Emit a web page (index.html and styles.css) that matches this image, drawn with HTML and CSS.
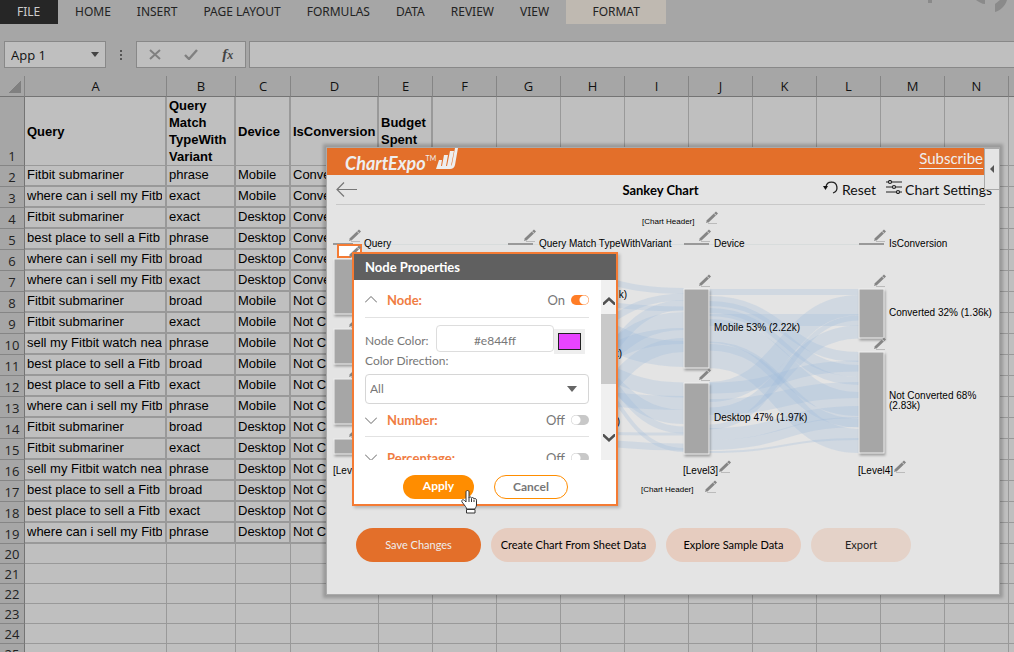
FILE: index.html
```html
<!DOCTYPE html>
<html lang="en">
<head>
    <meta charset="UTF-8">
    <meta name="viewport" content="width=device-width, initial-scale=1.0">
    <title>Sankey Chart</title>
    <link rel="stylesheet" href="styles.css">
</head>
<body>
    <nav class="ribbon">
        <a href="#" class="tab tab-file">FILE</a>
        <a href="#" class="tab">HOME</a>
        <a href="#" class="tab">INSERT</a>
        <a href="#" class="tab">PAGE LAYOUT</a>
        <a href="#" class="tab">FORMULAS</a>
        <a href="#" class="tab">DATA</a>
        <a href="#" class="tab">REVIEW</a>
        <a href="#" class="tab">VIEW</a>
        <a href="#" class="tab tab-format">FORMAT</a>
        <svg class="ribbon-art" width="88" height="13" viewBox="0 0 88 13">
            <path d="M2 0h4v3H2zM50 0h9v4c-3 0-6-2-9-4zM69 4l5-4h7c-2 6-6 10-12 12z" fill="#8a8a8a"/>
        </svg>
    </nav>

    <div class="formula-bar">
        <div class="name-box">
            <input type="text" value="App 1" aria-label="Name box">
            <button type="button" aria-label="Names"><svg width="8" height="5" viewBox="0 0 8 5"><path d="M0 0h8L4 5z" fill="#444"/></svg></button>
        </div>
        <svg class="dots" width="4" height="12" viewBox="0 0 4 12"><path d="M1 1h2v2H1zM1 5h2v2H1zM1 9h2v2H1z" fill="#555"/></svg>
        <div class="formula-buttons">
            <button type="button" aria-label="Cancel entry"><svg width="12" height="11" viewBox="0 0 12 11"><path d="M1 1l10 9M11 1L1 10" stroke="#808080" stroke-width="2" fill="none"/></svg></button>
            <button type="button" aria-label="Enter"><svg width="14" height="11" viewBox="0 0 14 11"><path d="M1 6l4 4 8-9" stroke="#808080" stroke-width="2.4" fill="none"/></svg></button>
            <button type="button" class="fx" aria-label="Insert function">f<small>x</small></button>
        </div>
        <input class="formula-input" type="text" aria-label="Formula">
    </div>

    <main class="sheet">
        <table>
            <colgroup>
                <col class="w-num"><col class="w-a"><col class="w-b"><col class="w-c"><col class="w-d"><col class="w-e">
                <col><col><col><col><col><col><col><col><col><col>
            </colgroup>
            <thead id="sheetHead"></thead>
            <tbody id="sheetBody"></tbody>
        </table>
    </main>

    <section class="panel">
        <header class="panel-header">
            <div class="logo">ChartExpo<sup>TM</sup>
                <svg width="22" height="22" viewBox="0 0 22 22"><path d="M3 12h3l-1 6H1zM8 7h4l-2 11H6zM14 3h4l-3 15h-4zM19 0h3l-3 17q-1 4-5 4H0l1-3h13q2 0 2-2z" fill="#eee"/></svg>
            </div>
            <a href="#" class="subscribe">Subscribe</a>
        </header>
        <button type="button" class="collapse" aria-label="Collapse"><svg width="4" height="8" viewBox="0 0 4 8"><path d="M4 0v8L0 4z" fill="#555"/></svg></button>

        <div class="toolbar">
            <button type="button" aria-label="Back"><svg width="21" height="15" viewBox="0 0 21 15"><path d="M21 7.500H1M8 .5l-7 7 7 7" stroke="#777" fill="none" stroke-width="1.200"/></svg></button>
            <h1>Sankey Chart</h1>
            <div class="tools">
                <button type="button">
                    <svg width="16" height="15" viewBox="0 0 16 15"><path d="M3 7a5.500 5.500 0 1 1 7 6" stroke="#222" stroke-width="1.300" fill="none"/><path d="M0 6h5l-2.500 4z" fill="#111"/></svg>
                    Reset
                </button>
                <button type="button">
                    <svg width="16" height="14" viewBox="0 0 16 14"><g stroke="#222" stroke-width="1.200" fill="#e4e4e4"><path d="M0 2h16M0 7h16M0 12h16"/><circle cx="4" cy="2" r="1.500"/><circle cx="8" cy="7" r="1.500"/><circle cx="12" cy="12" r="1.500"/></g></svg>
                    Chart Settings
                </button>
            </div>
        </div>

        <svg class="chart" width="672" height="300" viewBox="327 205 672 300">
            <defs>
                <g id="pencil">
                    <path d="M1.500 10.500L11 1.500" stroke="#858585" stroke-width="3"/>
                    <path d="M0 12l1-3 2 2z" fill="#858585"/>
                    <path d="M8.200 2.400l2 2.200" stroke="#dcdcdc" stroke-width="1"/>
                    <path d="M2 12.500h9" stroke="#bbb"/>
                </g>
            </defs>

            <g class="flows">
                <path d="M534 272C609 272 609 291 684 291" stroke-width="6"/>
                <path d="M534 345C609 345 609 297 684 297" stroke-width="7"/>
                <path d="M534 300C609 300 609 309 684 309" stroke-width="5"/>
                <path d="M534 400C609 400 609 305 684 305" stroke-width="10"/>
                <path d="M534 385C609 385 609 321 684 321" stroke-width="18"/>
                <path d="M534 370C609 370 609 336 684 336" stroke-width="16"/>
                <path d="M534 318C609 318 609 354 684 354" stroke-width="26"/>
                <path d="M534 430C609 430 609 345 684 345" stroke-width="14"/>
                <path d="M534 355C609 355 609 390 684 390" stroke-width="15"/>
                <path d="M534 395C609 395 609 403 684 403" stroke-width="14"/>
                <path d="M534 340C609 340 609 417 684 417" stroke-width="14"/>
                <path d="M534 325C609 325 609 430 684 430" stroke-width="7"/>
                <path d="M534 433C609 433 609 434 684 434" stroke-width="3"/>
                <path d="M534 330C609 330 609 450 684 450" stroke-width="4"/>
                <path d="M534 440C609 440 609 447 684 447" stroke-width="7"/>

                <path d="M709 292H859" stroke-width="6"/>
                <path d="M709 320H859" stroke-width="12"/>
                <path d="M709 301C784 301 784 357 859 357" stroke-width="10"/>
                <path d="M709 307C784 307 784 371 859 371" stroke-width="12"/>
                <path d="M709 312C784 312 784 381 859 381" stroke-width="8"/>
                <path d="M709 331C784 331 784 404 859 404" stroke-width="24"/>
                <path d="M709 346C784 346 784 423 859 423" stroke-width="9"/>
                <path d="M709 356C784 356 784 441 859 441" stroke-width="24"/>
                <path d="M709 392C784 392 784 305 859 305" stroke-width="20"/>
                <path d="M709 414C784 414 784 332 859 332" stroke-width="13"/>
                <path d="M709 427C784 427 784 318 859 318" stroke-width="5"/>
                <path d="M709 388C784 388 784 366 859 366" stroke-width="11"/>
                <path d="M709 407C784 407 784 390 859 390" stroke-width="16"/>
                <path d="M709 434C784 434 784 412 859 412" stroke-width="12"/>
                <path d="M709 445C784 445 784 422 859 422" stroke-width="10"/>
                <path d="M709 452C784 452 784 439 859 439" stroke-width="2"/>
            </g>

            <path class="level-line" d="M333 244.500H859"/>
            <path class="level-mark" d="M333 244h20M508 244h25M684 244h25M859 244h25"/>

            <g class="nodes">
                <rect x="334" y="259" width="25" height="55"/>
                <rect x="334" y="329" width="25" height="35"/>
                <rect x="334" y="379" width="25" height="45"/>
                <rect x="334" y="439" width="25" height="15"/>
                <rect x="684" y="289" width="25" height="79"/>
                <rect x="684" y="383" width="25" height="71"/>
                <rect x="859" y="289" width="25" height="49"/>
                <rect x="859" y="352" width="25" height="101"/>
            </g>

            <rect x="338" y="245" width="23" height="12" fill="#fff" stroke="#f47b34" stroke-width="2"/>

            <use href="#pencil" x="706" y="211"/>
            <use href="#pencil" x="349" y="229"/>
            <use href="#pencil" x="524" y="229"/>
            <use href="#pencil" x="699" y="229"/>
            <use href="#pencil" x="874" y="229"/>
            <use href="#pencil" x="349" y="245"/>
            <use href="#pencil" x="349" y="315"/>
            <use href="#pencil" x="349" y="365"/>
            <use href="#pencil" x="349" y="425"/>
            <use href="#pencil" x="699" y="274"/>
            <use href="#pencil" x="699" y="368"/>
            <use href="#pencil" x="874" y="274"/>
            <use href="#pencil" x="874" y="337"/>
            <use href="#pencil" x="719" y="460"/>
            <use href="#pencil" x="894" y="460"/>
            <use href="#pencil" x="705" y="480"/>

            <text class="small" x="642" y="224">[Chart Header]</text>
            <text x="364" y="247">Query</text>
            <text x="539" y="247">Query Match TypeWithVariant</text>
            <text x="714" y="247">Device</text>
            <text x="889" y="247">IsConversion</text>
            <text x="627" y="298" text-anchor="end">k)</text>
            <text x="622" y="357" text-anchor="end">k)</text>
            <text x="620" y="425" text-anchor="end">k)</text>
            <text x="714" y="331">Mobile 53% (2.22k)</text>
            <text x="714" y="421">Desktop 47% (1.97k)</text>
            <text x="889" y="316">Converted 32% (1.36k)</text>
            <text x="889" y="399">Not Converted 68%</text>
            <text x="889" y="409">(2.83k)</text>
            <text x="333" y="474">[Level1]</text>
            <text x="683" y="474">[Level3]</text>
            <text x="858" y="474">[Level4]</text>
            <text class="small" x="641" y="492">[Chart Header]</text>
        </svg>

        <div class="actions">
            <button type="button" class="pill pill-save">Save Changes</button>
            <button type="button" class="pill pill-create">Create Chart From Sheet Data</button>
            <button type="button" class="pill pill-explore">Explore Sample Data</button>
            <button type="button" class="pill pill-export">Export</button>
        </div>

        <form class="dialog">
            <h2>Node Properties</h2>
            <div class="dialog-body">
                <div class="fields">
                    <div class="group group-first">
                        <svg width="12" height="7" viewBox="0 0 12 7"><path d="M0 6.500l6-6 6 6" stroke="#666" fill="none"/></svg>
                        <h3>Node:</h3>
                        <label for="nodeOn">On</label>
                        <input type="checkbox" class="switch" id="nodeOn" checked>
                    </div>
                    <div class="color-row">
                        <label for="nodeColor">Node Color:</label>
                        <input type="text" id="nodeColor" value="#e844ff">
                        <button type="button" class="swatch" aria-label="Pick color"></button>
                    </div>
                    <label class="direction" for="direction">Color Direction:</label>
                    <div class="select-wrap">
                        <select id="direction"><option>All</option></select>
                        <svg width="10" height="6" viewBox="0 0 10 6"><path d="M0 0h10L5 6z" fill="#666"/></svg>
                    </div>
                    <div class="group group-tight">
                        <svg width="12" height="7" viewBox="0 0 12 7"><path d="M0 .5l6 6 6-6" stroke="#666" fill="none"/></svg>
                        <h3>Number:</h3>
                        <label for="numberOn">Off</label>
                        <input type="checkbox" class="switch" id="numberOn">
                    </div>
                    <div class="group group-last">
                        <svg width="12" height="7" viewBox="0 0 12 7"><path d="M0 .5l6 6 6-6" stroke="#666" fill="none"/></svg>
                        <h3>Percentage:</h3>
                        <label for="percentOn">Off</label>
                        <input type="checkbox" class="switch" id="percentOn">
                    </div>
                </div>
                <div class="scrollbar">
                    <svg width="12" height="8" viewBox="0 0 12 8"><path d="M0 5.500L6 0l6 5.500V9L6 3.500 0 9z" fill="#505050"/></svg>
                    <div class="thumb"></div>
                    <svg width="12" height="8" viewBox="0 0 12 8"><path d="M0 2.500L6 8l6-5.500V-1L6 4.500 0-1z" fill="#505050"/></svg>
                </div>
            </div>
            <div class="dialog-footer">
                <button type="button" class="apply">Apply</button>
                <button type="button" class="cancel">Cancel</button>
            </div>
            <svg class="cursor" width="17" height="24" viewBox="0 0 17 24"><path d="M4.500 16.500L1 12c-1-2 1-3 2.500-1.500L5 12V2c0-2 3-2 3 0v6c0-1.500 2.500-1.500 2.500.5 0-1.500 2.500-1.200 2.500.7 0-1.200 2.500-1 2.500 1V15c0 2-1.500 3-1.500 4H5.500c0-1-.5-2-1-2.500zM5.500 19.500H14V23H5.500z" fill="#fff" stroke="#333"/><path d="M8 8v4M10.500 9v3M13 10v2" stroke="#333"/></svg>
        </form>
    </section>

    <script>
        const f = 'Fitbit submariner';
        const w = 'where can i sell my Fitb';
        const b = 'best place to sell a Fitb';
        const s = 'sell my Fitbit watch nea';
        const header = ['Query', 'Query Match TypeWith Variant', 'Device', 'IsConversion', 'Budget Spent'];
        const rows = [
            [f, 'phrase', 'Mobile'], [w, 'exact', 'Mobile'], [f, 'exact', 'Desktop'],
            [b, 'phrase', 'Desktop'], [w, 'broad', 'Desktop'], [w, 'exact', 'Desktop'],
            [f, 'broad', 'Mobile'], [f, 'exact', 'Mobile'], [s, 'phrase', 'Mobile'],
            [b, 'broad', 'Mobile'], [b, 'exact', 'Mobile'], [w, 'phrase', 'Mobile'],
            [f, 'broad', 'Desktop'], [f, 'exact', 'Desktop'], [s, 'phrase', 'Desktop'],
            [b, 'broad', 'Desktop'], [b, 'exact', 'Desktop'], [w, 'phrase', 'Desktop']
        ];
        const letters = 'ABCDEFGHIJKLMN'.split('');
        letters.push('');

        document.getElementById('sheetHead').innerHTML =
            '<tr><th class="corner"></th>' + letters.map(l => `<th>${l}</th>`).join('') + '</tr>';

        // row 1 is the header, 2-19 hold data, the rest stay empty
        let html = '';
        for (let n = 1; n <= 25; n++) {
            let cells = [];
            if (n === 1) cells = header;
            else if (n <= 19) cells = [...rows[n - 2], n < 8 ? 'Converted' : 'Not Converted', ''];
            const type = n === 1 ? 'title-row' : n <= 19 ? 'data-row' : 'empty-row';
            html += `<tr class="${type}"><th>${n}</th>`;
            letters.forEach((l, i) => {
                html += i < cells.length ? `<td class="filled"><div>${cells[i]}</div></td>` : '<td></td>';
            });
            html += '</tr>';
        }
        document.getElementById('sheetBody').innerHTML = html;
    </script>
</body>
</html>
```
FILE: styles.css
```css
* { box-sizing: border-box; }
body { margin: 0; height: 100vh; overflow: hidden; display: flex; flex-direction: column; background: #a6a6a6; font-family: "Open Sans", sans-serif; color: #111; }
button, input, select { font: inherit; color: inherit; border: none; background: none; padding: 0; margin: 0; }
button { cursor: pointer; }
a { text-decoration: none; color: inherit; }
h1, h2, h3 { margin: 0; }
svg { display: block; flex: none; }

.ribbon { display: flex; height: 24px; margin-bottom: 17px; flex: none; font: 12px/23px "Noto Sans", sans-serif; color: #222; }
.tab { padding: 0 13px; }
.tab-file { width: 58px; padding-left: 17px; margin-right: 4px; background: #262626; color: #ccc; }
.tab-format { width: 100px; margin-left: 4px; background: #bfb9b1; text-align: center; }
.ribbon-art { margin-left: auto; }

.formula-bar { display: flex; height: 27px; flex: none; padding-left: 4px; }
.name-box { display: flex; width: 102px; padding: 0 6px; background: #bfbfbf; border: 1px solid #888; }
.name-box input { flex: 1; min-width: 0; font-size: 13px; }
.dots { margin: 8px 13px 0; }
.formula-buttons { display: flex; width: 110px; margin-right: 3px; justify-content: space-around; align-items: center; background: #bfbfbf; border: 1px solid #888; }
.fx { font: italic bold 15px "Liberation Serif", serif; color: #444; }
.fx small { font-size: 12px; }
.formula-input { flex: 1; background: #bfbfbf; border: 1px solid #888; border-right: none; }

.sheet { flex: 1; min-height: 0; overflow: hidden; padding-top: 8px; }
.sheet table { width: 1073px; table-layout: fixed; border-collapse: separate; border-spacing: 0; }
.sheet col { width: 64px; }
.sheet .w-num { width: 25px; }
.sheet .w-a { width: 142px; }
.sheet .w-b { width: 69px; }
.sheet .w-c { width: 55px; }
.sheet .w-d { width: 88px; }
.sheet .w-e { width: 54px; }
.sheet th { padding: 0; font-size: 13px; line-height: 16px; font-weight: normal; background: #a6a6a6; }
.sheet thead th { height: 21px; border-right: 1px solid #858585; border-bottom: 1px solid #747474; }
.sheet .corner { background: linear-gradient(135deg, #a6a6a6 50%, #808080 50%) 9px 5px / 12px 12px no-repeat #a6a6a6; }
.sheet tbody th { vertical-align: bottom; border-right: 1px solid #747474; border-bottom: 1px solid #858585; color: #222; padding-bottom: 1px; }
.sheet td { padding: 0; background: #bfbfbf; border-right: 1px solid #999; border-bottom: 1px solid #999; }
.sheet td.filled { padding: 0 3px 0 2px; border-right: 2px solid #999; border-bottom: 2px solid #999; font: 13px/17px "Liberation Sans", sans-serif; color: #000; }
.filled div { overflow: hidden; white-space: nowrap; }
.title-row td, .title-row th { height: 68px; }
.sheet .title-row td.filled { padding-bottom: 0; padding-right: 0; border-bottom-width: 1px; font-weight: bold; }
.title-row .filled div { white-space: normal; overflow: visible; }
.data-row td, .data-row th { height: 21px; }
.data-row .filled { vertical-align: top; }
.empty-row td, .empty-row th { height: 20px; }

.panel { position: absolute; left: 326px; right: 14px; top: 147px; background: #e4e4e4; border: 1px solid #aaa; box-shadow: 0 0 3px 3px rgba(0, 0, 0, .2); }
.panel-header { display: flex; justify-content: space-between; height: 27px; padding: 0 2px 0 18px; margin-right: 14px; background: #e36f2a; color: #eee; }
.logo { display: flex; font: italic bold 18px/30px Lato, sans-serif; }
.logo sup { font: 7px/20px Lato, sans-serif; }
.subscribe { height: 21px; border-bottom: 1px solid #eee; font: 15px/20px Lato, sans-serif; }
.collapse { position: absolute; right: 0; top: 0; width: 15px; height: 42px; display: grid; place-items: center; background: #e4e4e4; border: 1px solid #aaa; border-right: none; }
.toolbar { display: grid; grid-template-columns: 1fr auto 1fr; align-items: center; height: 30px; margin: 0 14px 0 9px; border-bottom: 1px solid #c8c8c8; }
.toolbar h1 { font: bold 13px/20px Lato, sans-serif; color: #000; }
.tools { display: flex; gap: 10px; justify-content: flex-end; margin-right: -7px; }
.tools button { display: flex; gap: 3px; font: 14px/20px Lato, sans-serif; white-space: nowrap; color: #111; }

.chart { font: 10px "Liberation Sans", sans-serif; fill: #000; }
.chart .small { font-size: 8px; }
.flows path { fill: none; stroke: #9dbbdc; stroke-opacity: .28; }
.nodes rect { fill: #a6a6a6; stroke: #f0f0f0; stroke-width: 1px; filter: drop-shadow(1px 2px 1px rgba(0, 0, 0, .3)); }
.level-line { stroke: #d8dcdc; }
.level-mark { stroke: #999; stroke-width: 2px; }

.actions { display: flex; gap: 10px; padding: 23px 0 32px 29px; }
.pill { height: 34px; border-radius: 17px; background: #e6ccbf; font: 11px/34px Lato, sans-serif; color: #000; white-space: nowrap; }
.pill-save { width: 125px; background: #e36f2a; color: #eee; }
.pill-create { width: 165px; }
.pill-explore { width: 135px; }
.pill-export { width: 100px; background: #e4d2c8; color: #222; }

.dialog { position: absolute; left: 25px; top: 104px; width: 266px; background: #fff; border: 2px solid #f47b34; box-shadow: 2px 2px 3px rgba(0, 0, 0, .2); font: 12px/16px Lato, sans-serif; color: #777; }
.dialog h2 { height: 26px; padding-left: 11px; background: #606060; font: bold 13px/27px Lato, sans-serif; color: #fff; }
.dialog-body { display: flex; height: 180px; overflow: hidden; }
.fields { flex: 1; padding-left: 11px; padding-right: 12px; }
.group { display: flex; align-items: center; height: 38px; border-bottom: 1px solid #e2e2e2; }
.group-first { padding-top: 2px; }
.group-tight { height: 33px; }
.group-last { height: 42px; }
.group h3 { flex: 1; margin-left: 10px; font: bold 13px/16px Lato, sans-serif; color: #f07d43; }
.group label { margin-right: 6px; font-size: 13px; }
.switch { appearance: none; width: 18px; height: 10px; border-radius: 5px; background: radial-gradient(circle at 5px 5px, #fff 4px, #c8c8c8 5px); }
.switch:checked { background: radial-gradient(circle at 13px 5px, #fff 4px, #ff7d26 5px); }
.color-row { display: flex; align-items: center; margin-top: 7px; height: 27px; }
.color-row label { width: 71px; padding-top: 5px; white-space: nowrap; }
.color-row input { width: 118px; height: 27px; border: 1px solid #ddd; border-radius: 4px; text-align: center; padding-top: 3px; }
.swatch { width: 31px; height: 25px; margin-top: 5px; border: 4px solid #eee; background: #e844ff; outline: 1px solid #222; outline-offset: -5px; }
.direction { display: block; margin: 1px 0 5px; }
.select-wrap { display: flex; align-items: center; height: 30px; padding-right: 11px; border: 1px solid #d6d6d6; border-radius: 4px; }
.select-wrap select { flex: 1; appearance: none; padding-left: 4px; }
.scrollbar { display: flex; flex-direction: column; align-items: center; width: 15px; padding: 17px 0 18px; background: #f0f0f0; }
.thumb { width: 15px; height: 70px; margin: 9px 0 auto; background: #c9c9c9; }
.dialog-footer { display: flex; gap: 20px; padding: 15px 0 5px 49px; }
.dialog-footer button { height: 24px; border-radius: 12px; font: bold 12px/20px Lato, sans-serif; }
.apply { width: 71px; padding-bottom: 2px; background: #ff8d00; color: #fff; }
.cancel { width: 74px; border: 1px solid #ff8d00; background: #fff; color: #777; }
.cursor { position: absolute; left: 107px; top: 236px; }
```
